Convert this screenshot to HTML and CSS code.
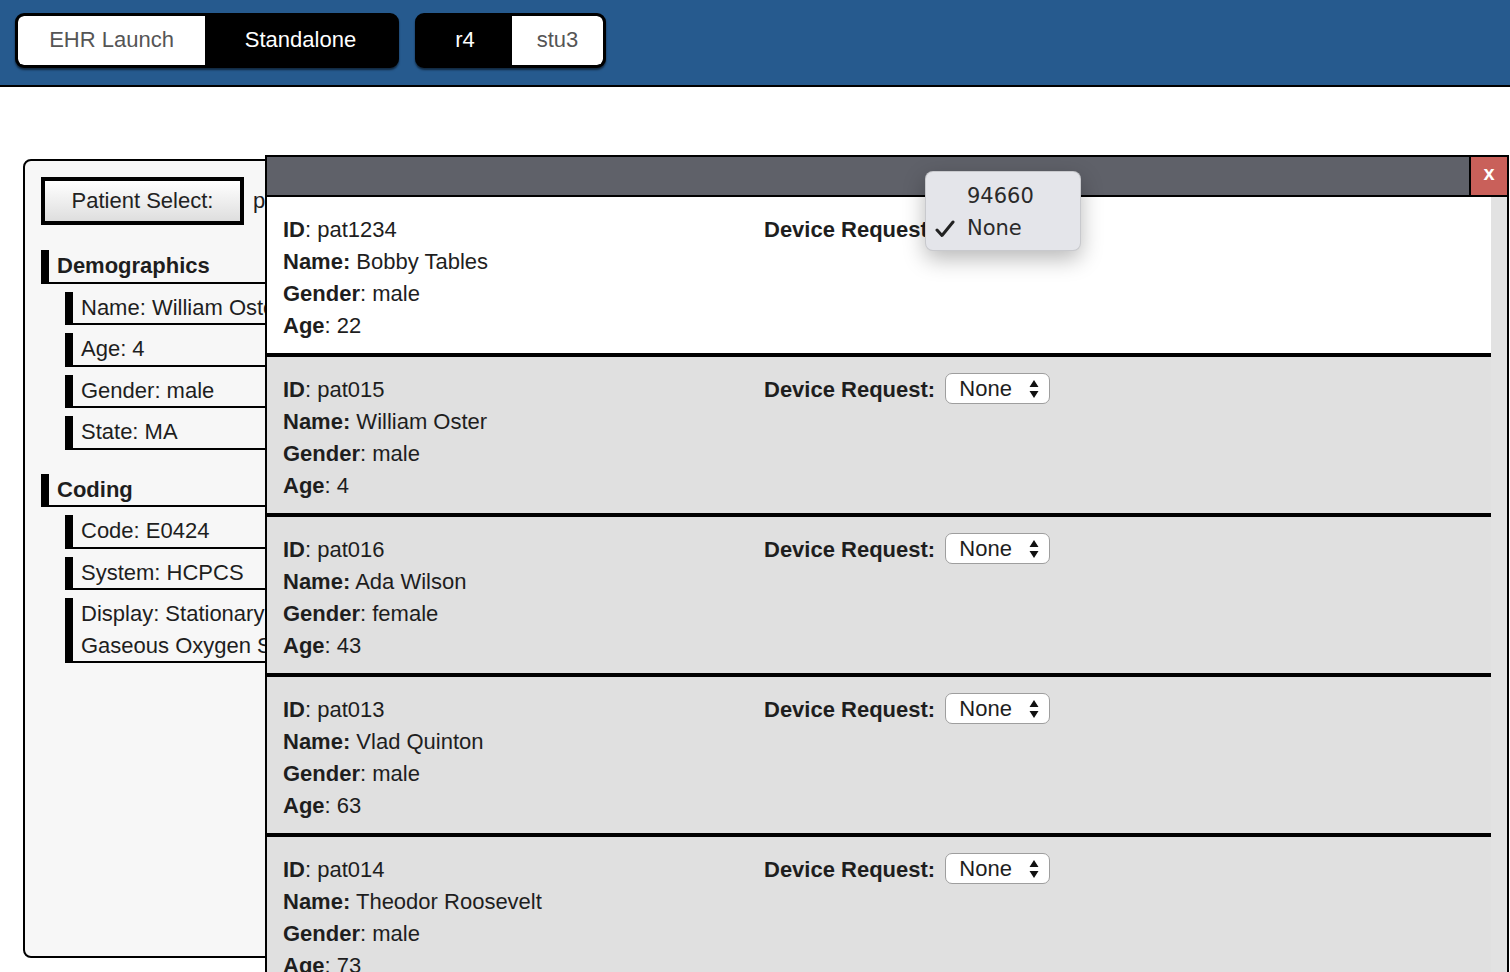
FILE: index.html
```html
<!DOCTYPE html>
<html lang="en">
<head>
<meta charset="utf-8">
<title>CRD Request Generator</title>
<link rel="stylesheet" href="styles.css">
</head>
<body>
<header class="topbar">
  <div class="toggle">
    <div class="tog tog-off w-ehr">EHR Launch</div>
    <div class="tog tog-on w-std">Standalone</div>
  </div>
  <div class="toggle">
    <div class="tog tog-on w-r4">r4</div>
    <div class="tog tog-off w-stu">stu3</div>
  </div>
</header>

<main class="page">
  <section class="panel">
    <div class="select-line">
      <div class="patient-btn">Patient Select:</div>
      <span class="patient-val">pat015</span>
    </div>
    <div class="group group-first">
      <div class="group-title">Demographics</div>
      <div class="item">Name: William Oster</div>
      <div class="item">Age: 4</div>
      <div class="item">Gender: male</div>
      <div class="item">State: MA</div>
    </div>
    <div class="group">
      <div class="group-title">Coding</div>
      <div class="item">Code: E0424</div>
      <div class="item">System: HCPCS</div>
      <div class="item">Display: Stationary Compressed Gaseous Oxygen System, Rental</div>
    </div>
  </section>
</main>

<div class="modal">
  <div class="modal-head"><div class="close">x</div></div>
  <div class="modal-body">
    <div class="row row-white">
      <div class="info">
        <div><b>ID</b>: pat1234</div>
        <div><b>Name:</b> Bobby Tables</div>
        <div><b>Gender</b>: male</div>
        <div><b>Age</b>: 22</div>
      </div>
      <div class="req"><b>Device Request:</b> <span class="sel">None<svg class="arrows" width="10" height="20" viewBox="0 0 10 20"><path d="M5 1 L9.5 8 L0.5 8 Z M0.5 12 L9.5 12 L5 19 Z" fill="#111"/></svg></span></div>
    </div>
    <div class="row">
      <div class="info">
        <div><b>ID</b>: pat015</div>
        <div><b>Name:</b> William Oster</div>
        <div><b>Gender</b>: male</div>
        <div><b>Age</b>: 4</div>
      </div>
      <div class="req"><b>Device Request:</b> <span class="sel">None<svg class="arrows" width="10" height="20" viewBox="0 0 10 20"><path d="M5 1 L9.5 8 L0.5 8 Z M0.5 12 L9.5 12 L5 19 Z" fill="#111"/></svg></span></div>
    </div>
    <div class="row">
      <div class="info">
        <div><b>ID</b>: pat016</div>
        <div><b>Name:</b> Ada Wilson</div>
        <div><b>Gender</b>: female</div>
        <div><b>Age</b>: 43</div>
      </div>
      <div class="req"><b>Device Request:</b> <span class="sel">None<svg class="arrows" width="10" height="20" viewBox="0 0 10 20"><path d="M5 1 L9.5 8 L0.5 8 Z M0.5 12 L9.5 12 L5 19 Z" fill="#111"/></svg></span></div>
    </div>
    <div class="row">
      <div class="info">
        <div><b>ID</b>: pat013</div>
        <div><b>Name:</b> Vlad Quinton</div>
        <div><b>Gender</b>: male</div>
        <div><b>Age</b>: 63</div>
      </div>
      <div class="req"><b>Device Request:</b> <span class="sel">None<svg class="arrows" width="10" height="20" viewBox="0 0 10 20"><path d="M5 1 L9.5 8 L0.5 8 Z M0.5 12 L9.5 12 L5 19 Z" fill="#111"/></svg></span></div>
    </div>
    <div class="row">
      <div class="info">
        <div><b>ID</b>: pat014</div>
        <div><b>Name:</b> Theodor Roosevelt</div>
        <div><b>Gender</b>: male</div>
        <div><b>Age</b>: 73</div>
      </div>
      <div class="req"><b>Device Request:</b> <span class="sel">None<svg class="arrows" width="10" height="20" viewBox="0 0 10 20"><path d="M5 1 L9.5 8 L0.5 8 Z M0.5 12 L9.5 12 L5 19 Z" fill="#111"/></svg></span></div>
    </div>
  </div>
  <div class="popup">
    <div class="opt">94660</div>
    <div class="opt"><svg class="check" width="20" height="18" viewBox="0 0 20 18"><path d="M2 10 L7 15.5 L18 2" fill="none" stroke="#222" stroke-width="3" stroke-linecap="round" stroke-linejoin="round"/></svg>None</div>
  </div>
</div>
</body>
</html>
```

FILE: styles.css
```css
* { box-sizing: border-box; }

html, body {
  margin: 0;
  padding: 0;
  overflow: hidden;
}

body {
  font-family: "Liberation Sans", Arial, sans-serif;
  font-size: 22px;
  color: #1e1e1e;
  background: #fff;
}

/* ---------- top bar ---------- */
.topbar {
  height: 87px;
  background: #265a8e;
  border-bottom: 2px solid #000;
  display: flex;
  align-items: flex-start;
  gap: 16px;
  padding: 13px 0 0 15px;
}

.toggle {
  display: flex;
  height: 55px;
  background: #000;
  border: 3px solid #000;
  border-radius: 9px;
  overflow: hidden;
  box-shadow: 0 2px 2px rgba(0, 0, 0, 0.55);
}

.tog {
  display: flex;
  align-items: center;
  justify-content: center;
  height: 100%;
  font-size: 22px;
  padding-bottom: 2px;
}

.tog-off { background: #fff; color: #555; }
.tog-on  { background: #000; color: #fff; }

.toggle .tog:first-child { border-radius: 6px 0 0 6px; }
.toggle .tog:last-child  { border-radius: 0 6px 6px 0; }

.w-ehr { width: 187px; }
.w-std { width: 191px; }
.w-r4  { width: 94px; }
.w-stu { width: 91px; }

/* ---------- left panel ---------- */
.page {
  padding: 72px 0 0 23px;
}

.panel {
  width: 436px;
  height: 799px;
  background: #f7f7f7;
  border: 2px solid #000;
  border-radius: 8px;
  padding: 16px 16px 0 16px;
  overflow: hidden;
}

.select-line {
  display: flex;
  align-items: center;
  gap: 9px;
  height: 48px;
}

.patient-btn {
  width: 203px;
  height: 48px;
  border: 4px solid #000;
  background: linear-gradient(#ffffff, #dedede);
  display: flex;
  align-items: center;
  justify-content: center;
  color: #222;
  flex: none;
}

.patient-val {
  white-space: nowrap;
}

.group {
  margin-top: 24px;
  display: flex;
  flex-direction: column;
  gap: 8px;
}

.group-first { margin-top: 25px; }

.group-title {
  font-weight: bold;
  line-height: 31.5px;
  border-left: 8px solid #000;
  border-bottom: 2px solid #000;
  padding-left: 8px;
}

.item {
  margin-left: 24px;
  line-height: 31.5px;
  border-left: 8px solid #000;
  border-bottom: 2px solid #000;
  padding-left: 8px;
}

/* ---------- modal ---------- */
.modal {
  position: fixed;
  left: 265px;
  top: 155px;
  width: 1244px;
  height: 860px;
  border: 2px solid #000;
  background: #e2e2e2;
}

.modal-head {
  height: 40px;
  background: #5f6169;
  border-bottom: 2px solid #000;
  display: flex;
  justify-content: flex-end;
}

.close {
  width: 38px;
  height: 38px;
  border-left: 2px solid #000;
  background: #c9605a;
  color: #fff;
  font-weight: bold;
  font-size: 20px;
  display: flex;
  align-items: center;
  justify-content: center;
  padding-bottom: 5px;
}

.modal-body {
  padding-right: 16px;
}

.row {
  display: grid;
  grid-template-columns: 481px 1fr;
  padding: 16.5px 16px 11.5px 16px;
  background: #e0e0e0;
  border-bottom: 4px solid #000;
  line-height: 32px;
}

.row-white { background: #fff; }

.info b, .req b { color: #1e1e1e; }

.sel {
  display: inline-flex;
  align-items: center;
  justify-content: space-between;
  vertical-align: middle;
  width: 105px;
  height: 31px;
  margin-left: 4px;
  padding: 0 10px 0 13px;
  background: #fff;
  border: 1px solid #9e9e9e;
  border-radius: 7px;
  line-height: 29px;
  position: relative;
  top: -2px;
}

.arrows { display: block; }

/* native-looking open dropdown */
.popup {
  position: absolute;
  left: 658px;
  top: 14px;
  width: 156px;
  height: 80px;
  padding: 8px 0;
  background: #e4e5ea;
  border: 1px solid rgba(0, 0, 0, 0.12);
  border-radius: 8px;
  box-shadow: 0 8px 22px rgba(0, 0, 0, 0.28);
  font-family: "DejaVu Sans", "Liberation Sans", sans-serif;
  font-size: 21px;
  color: #2a2a2a;
}

.opt {
  position: relative;
  height: 32px;
  line-height: 32px;
  padding-left: 41px;
}

.check {
  position: absolute;
  left: 9px;
  top: 8px;
}
```
